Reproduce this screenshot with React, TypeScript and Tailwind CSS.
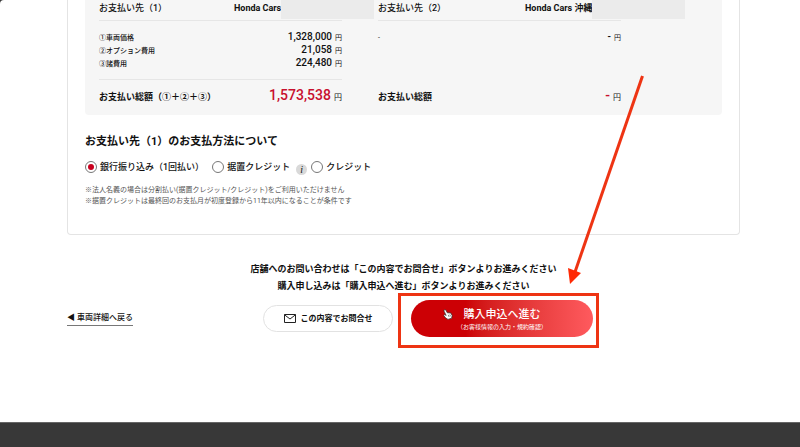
import { ReactNode } from "react";

const costs = [
  { label: "①車両価格", price: "1,328,000" },
  { label: "②オプション費用", price: "21,058" },
  { label: "③諸費用", price: "224,480" },
];

const Payee = ({ label, children }: { label: string; children: ReactNode }) => {
  return (
    <div className="flex h-[21px] items-center border-b border-[#e6e6e6] pb-[2px] text-[9px] font-medium">
      <h2 className="grow whitespace-nowrap">{label}</h2>
      {children}
    </div>
  );
};

// shop branch names are masked
const Mask = () => (
  <span className="h-[19px] w-[93px] shrink-0 bg-[#ebebeb]"></span>
);

const Total = ({ label, price }: { label: string; price: string }) => {
  return (
    <div className="flex h-[31px] items-baseline justify-between whitespace-nowrap leading-[30px]">
      <p className="text-[9px] font-bold">{label}</p>
      <p className="text-[8px]">
        <span className="mr-[3px] text-[14px] font-medium text-[#c8102e]">
          {price}
        </span>
        円
      </p>
    </div>
  );
};

const Radio = ({
  value,
  checked,
  children,
}: {
  value: string;
  checked?: boolean;
  children: ReactNode;
}) => {
  return (
    <label className="flex items-center gap-[3px] whitespace-nowrap">
      <input
        type="radio"
        name="payment"
        value={value}
        defaultChecked={checked}
        className="grid size-3 appearance-none place-items-center rounded-full border border-[#777] bg-white before:size-[6px] before:rounded-full checked:before:bg-[#c8001e]"
      />
      {children}
    </label>
  );
};

const Pointer = () => {
  return (
    <svg
      viewBox="0 0 16 18"
      className="pointer-events-none absolute left-[32px] top-[9px] h-[11px] w-[10px]"
      aria-hidden="true"
    >
      <path
        d="M2 1.500C3 .8 4.200 1.200 4.700 2.200L6.800 6.200L12.500 6.500L14.800 10.500L14 15L8 17L4 14.500L1 10.500L2.500 9.200L5 10.500L1.500 3.500C1.200 2.700 1.400 1.900 2 1.500Z"
        fill="#fff"
        stroke="#333"
        strokeWidth="1.200"
      />
      <path d="M8.500 9.500L9.800 13M11 9L12.200 12" stroke="#333" />
    </svg>
  );
};

const Arrow = () => {
  return (
    <svg
      viewBox="0 0 82 210"
      className="pointer-events-none absolute -right-[52px] bottom-[52px] h-[210px] w-[82px]"
      aria-hidden="true"
    >
      <path d="M79.500 1L12 197" stroke="#ee3413" strokeWidth="3" />
      <path d="M5 193L18 198L7 209Z" fill="#ff2a05" />
    </svg>
  );
};

const Actions = () => {
  return (
    <div className="mt-[5px] flex items-center">
      <div className="flex-4">
        <a
          href="#detail"
          className="block w-fit whitespace-nowrap border-b border-[#777] text-[8px] font-medium leading-[14px]"
        >
          ◀ 車両詳細へ戻る
        </a>
      </div>
      <button className="flex h-[27px] w-[130px] items-center justify-center gap-[5px] rounded-full border border-[#e2e2e2] bg-white text-[8px] font-bold">
        <svg
          viewBox="0 0 12 9"
          className="h-[9px] w-[12px]"
          fill="none"
          stroke="#222"
          aria-hidden="true"
        >
          <path d="M.5.5h11v8H.5zM.5.8L6 5L11.500.8" />
        </svg>
        この内容でお問合せ
      </button>
      <button className="relative ml-[18px] flex h-[37px] w-[182px] flex-col items-center justify-center rounded-full bg-linear-to-r from-[#cc0005] from-30% to-[#ff5a5e] text-white">
        <span className="text-[11px] font-medium leading-[15px]">
          購入申込へ進む
        </span>
        <span className="text-[6px] leading-[9px]">
          （お客様情報の入力・規約確認）
        </span>
        <Pointer />
        <span className="pointer-events-none absolute -bottom-[11px] -left-[13px] -right-[6px] -top-[7px] border-3 border-[#ee3413]"></span>
        <Arrow />
      </button>
      <div className="flex-3"></div>
    </div>
  );
};

const App = () => {
  return (
    <div
      lang="ja"
      className="flex min-h-screen flex-col bg-[#383838] font-['Roboto','Noto_Sans_CJK_JP',sans-serif] text-[#111]"
    >
      <main className="grow rounded-tl-[4px] bg-white pb-[74px] pl-[67px] pr-[60px]">
        <section className="rounded-b-[4px] border border-t-0 border-[#e4e4e4] px-[17px] pb-[27px]">
          <div className="grid grid-cols-2 gap-9 rounded-b-[4px] bg-[#f6f6f6] pb-1 pl-[14px] pr-[101px]">
            <div>
              <Payee label="お支払い先（1）">
                <p className="flex w-[108px] items-center whitespace-nowrap font-bold">
                  Honda Cars
                  <Mask />
                </p>
              </Payee>
              <dl className="border-b border-[#e6e6e6] pb-[10px] pt-[9px]">
                {costs.map((cost) => (
                  <div
                    key={cost.label}
                    className="flex h-[13px] items-baseline justify-between text-[7px] leading-[13px]"
                  >
                    <dt className="font-medium">{cost.label}</dt>
                    <dd>
                      <span className="mr-[3px] text-[10px] font-medium">
                        {cost.price}
                      </span>
                      円
                    </dd>
                  </div>
                ))}
              </dl>
              <Total label="お支払い総額（①＋②＋③）" price="1,573,538" />
            </div>
            <div className="flex flex-col">
              <Payee label="お支払い先（2）">
                <p className="flex w-[96px] items-center whitespace-nowrap font-bold">
                  Honda Cars 沖縄
                  <Mask />
                </p>
              </Payee>
              <div className="flex grow items-baseline justify-between pt-[9px] text-[7px] leading-[13px]">
                <p>-</p>
                <p>
                  <span className="mr-[3px] text-[10px] font-medium">-</span>円
                </p>
              </div>
              <Total label="お支払い総額" price="-" />
            </div>
          </div>

          <fieldset className="pt-[13px]">
            <legend className="contents text-[11px] font-bold leading-[18px]">
              お支払い先（1）のお支払方法について
            </legend>
            <div className="mt-[6px] flex items-center text-[9px] font-medium leading-[16px]">
              <Radio value="bank" checked>
                銀行振り込み（1回払い）
              </Radio>
              <div className="ml-2 flex items-center">
                <Radio value="deferred">据置クレジット</Radio>
                <button
                  type="button"
                  aria-label="据置クレジットについて"
                  className="ml-[6px] mr-1 mt-[6px] grid size-[11px] place-items-center rounded-full bg-[#d9d9d9] font-['Liberation_Serif',serif] text-[10px] italic leading-none"
                >
                  i
                </button>
              </div>
              <Radio value="credit">クレジット</Radio>
            </div>
          </fieldset>
          <p className="mt-[10px] text-[7px] leading-[11px] text-[#555]">
            ※法人名義の場合は分割払い(据置クレジット/クレジット)をご利用いただけません
            <br></br>
            ※据置クレジットは最終回のお支払月が初度登録から11年以内になることが条件です
          </p>
        </section>

        <p className="mt-[26px] text-center text-[9px] font-bold leading-[17px]">
          店舗へのお問い合わせは「この内容でお問合せ」ボタンよりお進みください
          <br></br>
          購入申し込みは「購入申込へ進む」ボタンよりお進みください
        </p>
        <Actions />
      </main>
      <footer className="h-[25px] border-t border-[#666] bg-[#383838]"></footer>
    </div>
  );
};

export default App;
